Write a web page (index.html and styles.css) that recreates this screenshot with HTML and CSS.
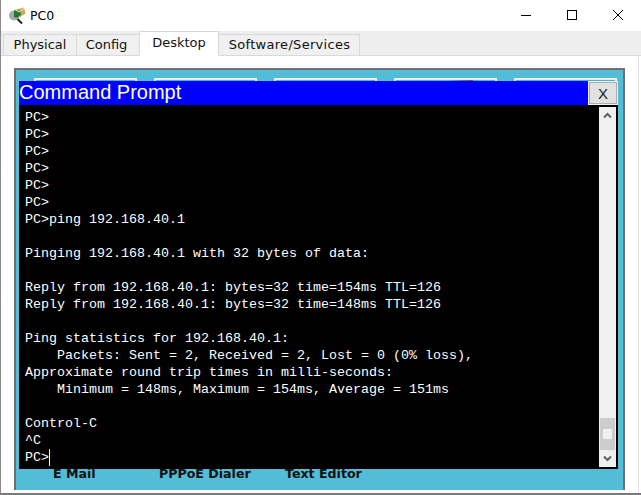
FILE: index.html
```html
<!DOCTYPE html>
<html lang="en">
<head>
<meta charset="utf-8">
<title>PC0</title>
<link rel="stylesheet" href="styles.css">
</head>
<body>
<div class="window">
  <header class="titlebar">
    <svg class="app-icon" width="26" height="20" viewBox="0 0 26 20">
      <path d="M9 12.500l5 5" stroke="#222" stroke-width="2" fill="none"/>
      <circle cx="6" cy="9.500" r="5" fill="#a9a9a9"/>
      <path d="M6 4l10-2.500 1.500 6-7 4.500-3-2z" fill="#c8a85a"/>
      <path d="M6 4.500h6l1 4-4 3.500-3-1z" fill="#1c7a30"/>
      <path d="M7 3.500l4 2.500 5-3.500" stroke="#f3e7b8" fill="none"/>
    </svg>
    <span class="app-name">PC0</span>
    <div class="controls">
      <svg width="46" height="31" viewBox="0 0 46 31"><path d="M18 15.500h10" stroke="#000"/></svg>
      <svg width="46" height="31" viewBox="0 0 46 31"><rect x="18.500" y="10.500" width="9" height="9" fill="none" stroke="#000"/></svg>
      <svg width="46" height="31" viewBox="0 0 46 31"><path d="M18 10l10 10M28 10l-10 10" stroke="#000" fill="none"/></svg>
    </div>
  </header>
  <nav class="tabs">
    <div class="tab t1">Physical</div>
    <div class="tab t2">Config</div>
    <div class="tab t3 active">Desktop</div>
    <div class="tab t4">Software/Services</div>
  </nav>
  <main class="content">
    <section class="desktop">
      <div class="desk-tops">
        <span class="desk-box"></span><span class="desk-box"></span><span class="desk-box"></span><span class="desk-box shaded"></span><span class="desk-box"></span>
      </div>
      <div class="desk-labels">
        <span class="l1">E Mail</span><span class="l2">PPPoE Dialer</span><span class="l3">Text Editor</span>
      </div>
      <div class="cmd">
        <div class="cmd-title">
          <span class="cmd-name">Command Prompt</span>
          <button class="cmd-close">X</button>
        </div>
        <div class="cmd-body">
<pre class="term">PC&gt;
PC&gt;
PC&gt;
PC&gt;
PC&gt;
PC&gt;
PC&gt;ping 192.168.40.1

Pinging 192.168.40.1 with 32 bytes of data:

Reply from 192.168.40.1: bytes=32 time=154ms TTL=126
Reply from 192.168.40.1: bytes=32 time=148ms TTL=126

Ping statistics for 192.168.40.1:
    Packets: Sent = 2, Received = 2, Lost = 0 (0% loss),
Approximate round trip times in milli-seconds:
    Minimum = 148ms, Maximum = 154ms, Average = 151ms

Control-C
^C
PC&gt;<span class="caret"></span></pre>
          <div class="scrollbar">
            <svg class="arrow" width="17" height="17" viewBox="0 0 17 17"><path d="M5 10.500l3.500-3.500 3.500 3.500" stroke="#606060" stroke-width="2" fill="none"/></svg>
            <div class="track"></div>
            <div class="thumb"><span class="grip"></span></div>
            <svg class="arrow" width="17" height="17" viewBox="0 0 17 17"><path d="M5 6.500l3.500 3.500 3.500-3.500" stroke="#606060" stroke-width="2" fill="none"/></svg>
          </div>
        </div>
      </div>
    </section>
  </main>
</div>
</body>
</html>
```

FILE: styles.css
```css
* { box-sizing: border-box; }
html, body { margin: 0; height: 100%; }
body { background: #fff; overflow: hidden; }
.window {
  width: 641px; height: 495px;
  display: flex; flex-direction: column;
  background: #fff;
  border-left: 1px solid #8a8a8a;
  border-bottom: 2px solid #7a7a7a;
  font-family: "DejaVu Sans", sans-serif;
  color: #000;
}
.titlebar { height: 31px; display: flex; align-items: center; flex: none; padding-left: 7px; }
.app-icon { flex: none; }
.app-name { font: 12.5px "DejaVu Sans", sans-serif; margin-left: -4px; }
.controls { margin-left: auto; display: flex; }
.controls svg { display: block; }
.tabs {
  height: 25px; flex: none; display: flex; align-items: flex-end;
  background: #eeeeee; padding-left: 2px;
  border-bottom: 1px solid #d9d9d9;
}
.tab {
  height: 22px; margin-bottom: -1px; padding-bottom: 2px;
  display: flex; align-items: center; justify-content: center;
  background: #f0f0f0; border: 1px solid #d9d9d9;
  font-size: 13px; color: #111; white-space: nowrap;
}
.tab + .tab { margin-left: -1px; }
.t1 { width: 74px; }
.t2 { width: 64px; padding-right: 3px; }
.t3 { width: 80px; }
.t4 { width: 142px; letter-spacing: 0.3px; padding-left: 1px; }
.tab.active { height: 25px; background: #fff; border-bottom-color: #fff; z-index: 1; padding-bottom: 3px; }
.content { flex: 1; padding: 12px 13px 3px 13px; min-height: 0; display: flex; border-right: 1px solid #e0e0e0; margin-right: 2px; }
.desktop {
  flex: 1; position: relative;
  background: #53bcd6;
  border-top: 2px solid #6f6f6f;
  border-left: 2px solid #6f6f6f;
  border-right: 2px solid #6f6f6f;
}
.desk-tops { display: flex; gap: 17px; padding: 8px 0 0 18px; }
.desk-box { width: 103px; height: 4px; background: #3fb4dc; border: 2px solid #eeeede; border-bottom: 0; }
.desk-box.shaded { background: linear-gradient(90deg, #3fb4dc 52%, #55506a 78%, #3fb4dc 78%); }
.desk-labels {
  position: absolute; left: 0; right: 0; top: 396px;
  font: bold 12.6px "DejaVu Sans", sans-serif; color: #111;
}
.desk-labels span { position: absolute; white-space: nowrap; }
.l1 { left: 37px; } .l2 { left: 143px; } .l3 { left: 269px; }
.cmd {
  position: absolute; left: 3px; top: 11px;
  width: 599px; height: 388px;
  display: flex; flex-direction: column;
  z-index: 1;
}
.cmd-title { height: 24px; flex: none; background: #0000ff; position: relative; }
.cmd-name { font: 20px/23px "Liberation Sans", sans-serif; color: #fff; display: block; }
.cmd-close {
  position: absolute; right: 1px; top: 1px;
  width: 28px; height: 22px;
  background: #e1e1e1; border: 1px solid #adadad; outline: 1px solid #f3f3f3;
  font: 15px/1 "Liberation Sans", sans-serif; color: #222; padding: 0;
}
.cmd-body { flex: 1; background: #000; display: flex; min-height: 0; padding: 2px 2px 2px 0; }
.term {
  flex: 1; margin: 0; padding: 2px 0 0 6px; overflow: hidden;
  font: 13.33px/17px "Liberation Mono", monospace; color: #fff;
}
.caret { display: inline-block; width: 1px; height: 17px; background: #fff; vertical-align: bottom; }
.scrollbar {
  width: 17px; flex: none; background: #f0f0f0;
  display: flex; flex-direction: column;
}
.arrow { display: block; flex: none; }
.track { flex: 1; }
.thumb { height: 32px; margin: 0 1px; background: #cdcdcd; display: flex; align-items: center; justify-content: center; }
.grip { width: 9px; height: 10px; background: #f0f0f0; }
```
